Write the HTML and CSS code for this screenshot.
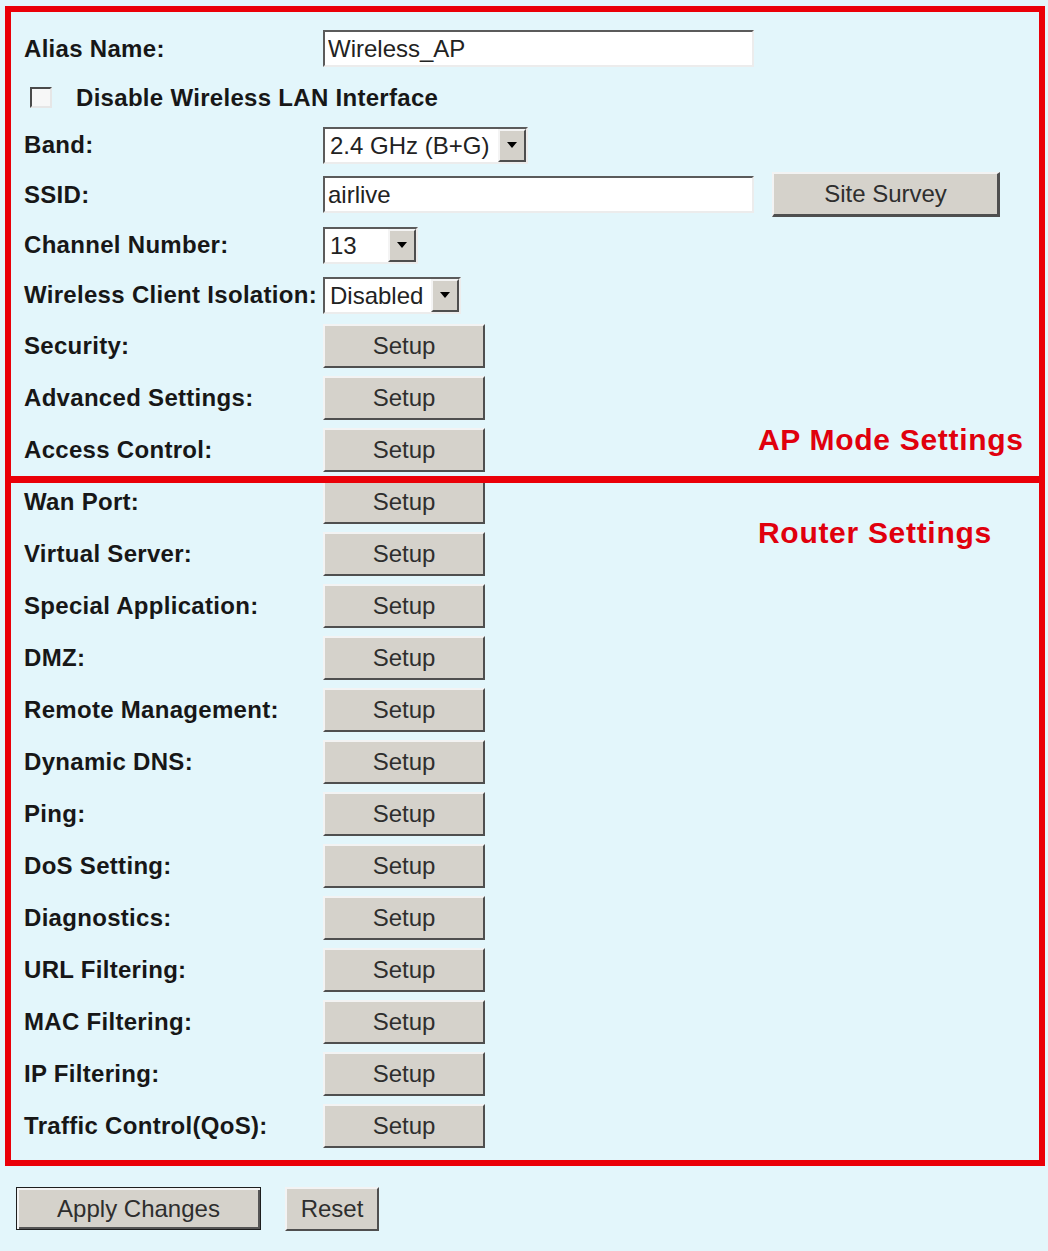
FILE: index.html
```html
<!DOCTYPE html>
<html lang="en">
  <head>
    <meta charset="UTF-8" />
    <meta name="viewport" content="width=device-width, initial-scale=1.0" />
    <title>Wireless Basic Settings</title>
    <link rel="stylesheet" href="styles.css">
  </head>
  <body>
    <form class="wlan-form" action="#" onsubmit="return false;">
      <div class="frame">

        <!-- access point options -->
        <div class="section">
          <div class="row r-alias">
            <span class="label">Alias Name:</span>
            <input class="text" type="text" name="alias" value="Wireless_AP">
          </div>
          <div class="row r-disable">
            <input class="check" type="checkbox" name="wlanDisabled">
            <span class="label label-wide">Disable Wireless LAN Interface</span>
          </div>
          <div class="row r-band">
            <span class="label">Band:</span>
            <span class="combo combo-band">
              <select name="band"><option>2.4 GHz (B+G)</option></select>
              <span class="drop"><i></i></span>
            </span>
          </div>
          <div class="row r-ssid">
            <span class="label">SSID:</span>
            <input class="text" type="text" name="ssid" value="airlive">
            <button class="btn btn-survey" type="button">Site Survey</button>
          </div>
          <div class="row r-channel">
            <span class="label">Channel Number:</span>
            <span class="combo combo-channel">
              <select name="chan"><option>13</option></select>
              <span class="drop"><i></i></span>
            </span>
          </div>
          <div class="row r-isolation">
            <span class="label">Wireless Client Isolation:</span>
            <span class="combo combo-isolation">
              <select name="isolation"><option>Disabled</option></select>
              <span class="drop"><i></i></span>
            </span>
          </div>
          <div class="row"><span class="label">Security:</span><button class="btn btn-setup" type="button">Setup</button></div>
          <div class="row"><span class="label">Advanced Settings:</span><button class="btn btn-setup" type="button">Setup</button></div>
          <div class="row"><span class="label">Access Control:</span><button class="btn btn-setup" type="button">Setup</button></div>

          <span class="tag tag-ap">AP Mode Settings</span>
        </div>

        <!-- router options -->
        <div class="section section-router">
          <div class="row"><span class="label">Wan Port:</span><button class="btn btn-setup" type="button">Setup</button></div>
          <div class="row"><span class="label">Virtual Server:</span><button class="btn btn-setup" type="button">Setup</button></div>
          <div class="row"><span class="label">Special Application:</span><button class="btn btn-setup" type="button">Setup</button></div>
          <div class="row"><span class="label">DMZ:</span><button class="btn btn-setup" type="button">Setup</button></div>
          <div class="row"><span class="label">Remote Management:</span><button class="btn btn-setup" type="button">Setup</button></div>
          <div class="row"><span class="label">Dynamic DNS:</span><button class="btn btn-setup" type="button">Setup</button></div>
          <div class="row"><span class="label">Ping:</span><button class="btn btn-setup" type="button">Setup</button></div>
          <div class="row"><span class="label">DoS Setting:</span><button class="btn btn-setup" type="button">Setup</button></div>
          <div class="row"><span class="label">Diagnostics:</span><button class="btn btn-setup" type="button">Setup</button></div>
          <div class="row"><span class="label">URL Filtering:</span><button class="btn btn-setup" type="button">Setup</button></div>
          <div class="row"><span class="label">MAC Filtering:</span><button class="btn btn-setup" type="button">Setup</button></div>
          <div class="row"><span class="label">IP Filtering:</span><button class="btn btn-setup" type="button">Setup</button></div>
          <div class="row"><span class="label">Traffic Control(QoS):</span><button class="btn btn-setup" type="button">Setup</button></div>

          <span class="tag tag-router">Router Settings</span>
        </div>
      </div>

      <div class="actions">
        <button class="btn btn-apply" type="submit">Apply Changes</button>
        <button class="btn btn-reset" type="reset">Reset</button>
      </div>
    </form>
  </body>
</html>
```

FILE: styles.css
```css
html, body {
  margin: 0;
  background: #e3f6fb;
}

body {
  font-family: "Liberation Sans", Arial, sans-serif;
  color: #171717;
}

.wlan-form {
  padding: 6px 0 0 5px;
}

/* red outline around the settings table */
.frame {
  width: 1040px;
  box-sizing: border-box;
  border: 6px solid #ea0008;
  padding: 11px 13px 8px 13px;
}

.section {
  position: relative;
}

/* line between the two groups, drawn over the first router row */
.section-router::before {
  content: "";
  position: absolute;
  top: 0;
  left: -13px;
  right: -13px;
  height: 7px;
  background: #ea0008;
  z-index: 2;
}

.row {
  display: flex;
  align-items: center;
  height: 52px;
}

.r-alias { height: 51px; }
.r-disable { height: 47px; }
.r-band { height: 48px; }
.r-ssid { height: 51px; }
.r-channel { height: 50px; }
.r-isolation { height: 50px; }

.label {
  flex: none;
  width: 299px;
  font-size: 24px;
  font-weight: bold;
  letter-spacing: 0.3px;
  white-space: nowrap;
}

.label-wide {
  width: auto;
}

/* inputs */
.text {
  width: 431px;
  height: 37px;
  box-sizing: border-box;
  margin: 0;
  padding: 0 3px;
  border: 2px solid;
  border-color: #5b5b5b #ececec #ececec #5b5b5b;
  background: #fff;
  font-family: "Liberation Sans", Arial, sans-serif;
  font-size: 24px;
  color: #222;
  outline: none;
}

.check {
  appearance: none;
  -webkit-appearance: none;
  flex: none;
  width: 22px;
  height: 21px;
  margin: 0 24px 0 6px;
  box-sizing: border-box;
  border: 2px solid;
  border-color: #4a4a4a #e6e6e6 #e6e6e6 #4a4a4a;
  background: #f7f7f7;
}

.combo {
  display: flex;
  align-items: stretch;
  height: 37px;
  box-sizing: border-box;
  border: 2px solid;
  border-color: #5b5b5b #ececec #ececec #5b5b5b;
  background: #fff;
}

.combo select {
  appearance: none;
  -webkit-appearance: none;
  flex: 1;
  min-width: 0;
  margin: 0;
  padding: 0 0 0 5px;
  border: 0;
  background: transparent;
  font-family: "Liberation Sans", Arial, sans-serif;
  font-size: 24px;
  color: #222;
  outline: none;
}

.combo-band { width: 205px; }
.combo-channel { width: 95px; }
.combo-isolation { width: 138px; }

.drop {
  flex: none;
  display: flex;
  align-items: center;
  justify-content: center;
  width: 28px;
  box-sizing: border-box;
  border: 2px solid;
  border-color: #f4f4f4 #4e4e4e #4e4e4e #f4f4f4;
  background: #d4d1ca;
}

.drop i {
  width: 0;
  height: 0;
  border-left: 5px solid transparent;
  border-right: 5px solid transparent;
  border-top: 6px solid #000;
}

/* push buttons */
.btn {
  margin: 0;
  padding: 0;
  box-sizing: border-box;
  border: 2px solid;
  border-color: #f3f3f3 #4f4f4f #4f4f4f #f3f3f3;
  background: #d5d2cb;
  font-family: "Liberation Sans", Arial, sans-serif;
  font-size: 24px;
  color: #2e2e2e;
  cursor: pointer;
}

.btn-setup {
  width: 162px;
  height: 44px;
}

.btn-survey {
  width: 228px;
  height: 45px;
  margin-left: 18px;
  border-right-width: 3px;
  border-bottom-width: 3px;
}

/* red captions for each group */
.tag {
  position: absolute;
  left: 734px;
  font-size: 30px;
  line-height: 34px;
  font-weight: bold;
  letter-spacing: 0.7px;
  color: #e0000d;
  white-space: nowrap;
}

.tag-ap { top: 400px; }
.tag-router { top: 40px; }

.actions {
  display: flex;
  gap: 24px;
  margin: 21px 0 0 11px;
}

.btn-apply {
  width: 245px;
  height: 43px;
  border: 1px solid #1e1e1e;
  box-shadow: inset 2px 2px #f3f3f3, inset -2px -2px #555;
}

.btn-reset {
  width: 94px;
  height: 44px;
}
```
